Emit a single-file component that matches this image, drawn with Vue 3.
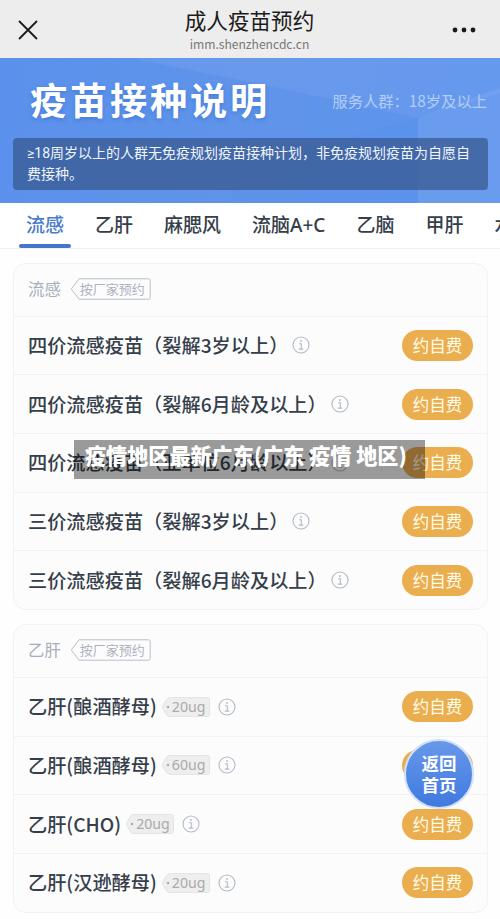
<script setup>
const tabs = ['流感', '乙肝', '麻腮风', '流脑A+C', '乙脑', '甲肝', '水痘']

const groups = [
  {
    title: '流感',
    rows: [
      { name: '四价流感疫苗（裂解3岁以上）' },
      { name: '四价流感疫苗（裂解6月龄及以上）' },
      { name: '四价流感疫苗（亚单位6月龄以上）' },
      { name: '三价流感疫苗（裂解3岁以上）' },
      { name: '三价流感疫苗（裂解6月龄及以上）' },
    ],
  },
  {
    title: '乙肝',
    rows: [
      { name: '乙肝(酿酒酵母)', dose: '20ug' },
      { name: '乙肝(酿酒酵母)', dose: '60ug' },
      { name: '乙肝(CHO)', dose: '20ug' },
      { name: '乙肝(汉逊酵母)', dose: '20ug' },
    ],
  },
]
</script>

<template>
  <div class="page">
    <header class="nav">
      <svg class="close" width="20" height="20" viewBox="0 0 20 20">
        <path d="M1 1 19 19M19 1 1 19" />
      </svg>
      <div class="heading">
        <div class="title">成人疫苗预约</div>
        <div class="host">imm.shenzhencdc.cn</div>
      </div>
      <svg class="more" width="24" height="6" viewBox="0 0 24 6">
        <circle cx="3" cy="3" r="2.4" /><circle cx="12" cy="3" r="2.4" /><circle cx="21" cy="3" r="2.4" />
      </svg>
    </header>

    <section class="banner">
      <svg class="facets" viewBox="0 0 500 145" preserveAspectRatio="none">
        <path d="M130 0H500V35L418 60 250 24Z" fill="#fff" opacity=".05" />
        <path d="M418 60 500 30V145H418Z" fill="#fff" opacity=".08" />
        <path d="M237 110 418 60V145H230Z" fill="#2c6ce4" opacity=".05" />
      </svg>
      <div class="banner-top">
        <h1>疫苗接种说明</h1>
        <span class="audience">服务人群：18岁及以上</span>
      </div>
      <p class="notice">≥18周岁以上的人群无免疫规划疫苗接种计划，非免疫规划疫苗为自愿自费接种。</p>
    </section>

    <nav class="tabs">
      <span v-for="(tab, i) in tabs" :key="tab" class="tab" :class="{ active: i === 0 }">{{ tab }}</span>
    </nav>

    <main class="list">
      <section v-for="group in groups" :key="group.title" class="card">
        <div class="card-head">
          <span class="card-title">{{ group.title }}</span>
          <span class="factory">
            <svg width="80" height="22" viewBox="0 0 80 22">
              <path d="M8 .8H77.5Q79.2 .8 79.2 2.5V19.5Q79.2 21.2 77.5 21.2H8L.8 11.8Q.3 11 .8 10.2Z" />
            </svg>
            <span>按厂家预约</span>
          </span>
        </div>
        <div v-for="(row, i) in group.rows" :key="i" class="row">
          <span class="name">{{ row.name }}</span>
          <span v-if="row.dose" class="dose">
            <svg width="48" height="20" viewBox="0 0 48 20">
              <path d="M7 .5H45.5Q47.5 .5 47.5 2.5V17.5Q47.5 19.5 45.5 19.5H7Q5 19 4 17L.8 11.5Q.2 10 .8 8.5L4 3Q5 1 7 .5Z" />
              <circle cx="6" cy="10" r="1.2" />
            </svg>
            <span>{{ row.dose }}</span>
          </span>
          <svg class="info" :class="{ spaced: row.dose }" width="18" height="18" viewBox="0 0 18 18">
            <circle cx="9" cy="9" r="8" />
            <path d="M7 7.7H9.3V13M6.8 13.1H11.3" />
            <circle class="dot" cx="9" cy="5" r=".9" />
          </svg>
          <button class="book">约自费</button>
        </div>
      </section>
    </main>

    <div class="caption">疫情地区最新广东(广东 疫情 地区)</div>
    <button class="home"><span>返回</span><span>首页</span></button>
  </div>
</template>

<style>
body {
  margin: 0;
  background: #fefefe;
}
</style>

<style scoped>
.page {
  position: relative;
  width: 500px;
  height: 919px;
  overflow: hidden;
  background: #fefefe;
  font-family: "Noto Sans CJK SC", "Noto Sans", sans-serif;
  color: #353e4a;
}
.page * {
  box-sizing: border-box;
}
button {
  border: 0;
  padding: 0;
  font-family: inherit;
}
.nav {
  display: flex;
  align-items: flex-start;
  justify-content: space-between;
  height: 58px;
  padding: 0 24px 0 18px;
  background: #ededed;
}
.close {
  margin-top: 20px;
  fill: none;
  stroke: #1c1c1c;
  stroke-width: 1.8;
}
.more {
  margin-top: 27px;
  fill: #191919;
}
.heading {
  padding-top: 6px;
  padding-left: 9px;
  text-align: center;
}
.title {
  font-size: 21.6px;
  line-height: 28px;
  color: #1c1c1c;
}
.host {
  padding-top: 1px;
  font-size: 12.1px;
  line-height: 17px;
  color: #777;
}
.banner {
  position: relative;
  height: 145px;
  padding: 18px 13px 0 13px;
  background: linear-gradient(90deg, #5b91ec, #6094ea 50%, #5d94ed);
}
.facets {
  position: absolute;
  inset: 0;
  width: 100%;
  height: 100%;
}
.banner-top {
  position: relative;
  display: flex;
  justify-content: space-between;
  align-items: center;
  height: 46px;
  padding-left: 17px;
}
h1 {
  margin: 0;
  font-size: 37.2px;
  line-height: 46px;
  font-weight: 700;
  letter-spacing: 2.8px;
  color: #fff;
  text-shadow: 0 2px 4px rgba(36, 92, 190, 0.4);
}
.audience {
  padding-top: 1px;
  font-size: 15.3px;
  color: #b4cdf6;
}
.notice {
  position: relative;
  width: 475px;
  height: 52px;
  margin: 16px 0 0;
  padding: 5px 10px 4px 14px;
  border-radius: 4px;
  background: rgba(52, 82, 134, 0.68);
  font-family: Roboto, "Noto Sans CJK SC", sans-serif;
  font-size: 14px;
  line-height: 20.5px;
  color: #f0f4fb;
}
.tabs {
  display: flex;
  gap: 31px;
  height: 46px;
  padding-left: 26px;
  border-bottom: 1px solid #f0f0f2;
  background: #fff;
  overflow: hidden;
}
.tab {
  position: relative;
  flex: none;
  font-family: "Noto Sans", "Noto Sans CJK SC", sans-serif;
  font-size: 19px;
  line-height: 44px;
  font-weight: 500;
}
.tab.active {
  color: #4a7ccb;
}
.tab.active::after {
  content: "";
  position: absolute;
  left: -7px;
  right: -7px;
  bottom: 0;
  height: 4px;
  border-radius: 2px;
  background: #4676c9;
}
.list {
  display: flex;
  flex-direction: column;
  gap: 14px;
  padding: 13.5px 12px 0 13px;
}
.card {
  border: 1px solid #f2f2f4;
  border-radius: 13px;
  background: #fcfcfc;
}
.card-head {
  display: flex;
  align-items: center;
  gap: 10px;
  height: 52px;
  padding: 0 0 1px 14px;
}
.card-title {
  padding-bottom: 2px;
  font-size: 16.4px;
  color: #a8adbc;
}
.factory,
.dose {
  display: grid;
  align-items: center;
}
.factory > *,
.dose > * {
  grid-area: 1 / 1;
}
.factory svg {
  fill: none;
  stroke: #b6bfcc;
}
.factory span {
  padding-left: 9px;
  font-size: 13px;
  line-height: 20px;
  color: #adb2be;
}
.row {
  display: flex;
  align-items: center;
  height: 58.7px;
  padding: 0 14px 0 14px;
  border-top: 1px solid #f2f2f4;
}
.name {
  padding-bottom: 1px;
  font-size: 19.2px;
  line-height: 28px;
  font-weight: 500;
  white-space: nowrap;
}
.dose {
  margin-left: 5px;
}
.dose svg path {
  fill: #eee;
  stroke: #e5e5e5;
}
.dose svg circle {
  fill: #aaa;
}
.dose span {
  padding-left: 10px;
  font-family: "Noto Sans", sans-serif;
  font-size: 14.2px;
  line-height: 20px;
  color: #aaa;
}
.info {
  flex: none;
  margin-left: 4px;
  fill: none;
  stroke: #b3bac7;
  stroke-width: 1.1;
}
.info.spaced {
  margin-left: 8px;
}
.info .dot {
  fill: #b3bac7;
  stroke: none;
}
.book {
  flex: none;
  width: 71px;
  height: 31px;
  margin-left: auto;
  border-radius: 16px;
  background: #ebae4f;
  color: #fffbe9;
  font-size: 16.5px;
  line-height: 29px;
}
.caption {
  position: absolute;
  left: 74px;
  top: 440px;
  width: 351px;
  height: 39px;
  padding-left: 11px;
  background: rgba(0, 0, 0, 0.39);
  color: #fff;
  font-size: 21.1px;
  line-height: 30px;
  font-weight: 900;
  white-space: nowrap;
}
.home {
  position: absolute;
  left: 404px;
  top: 739px;
  display: flex;
  flex-direction: column;
  align-items: center;
  justify-content: center;
  width: 70px;
  height: 70px;
  border: 2.5px solid #cfe0fb;
  border-radius: 50%;
  background: linear-gradient(#6798ea, #4079df);
  color: #fff;
  font-size: 17.5px;
  line-height: 22.5px;
  font-weight: 700;
}
</style>
